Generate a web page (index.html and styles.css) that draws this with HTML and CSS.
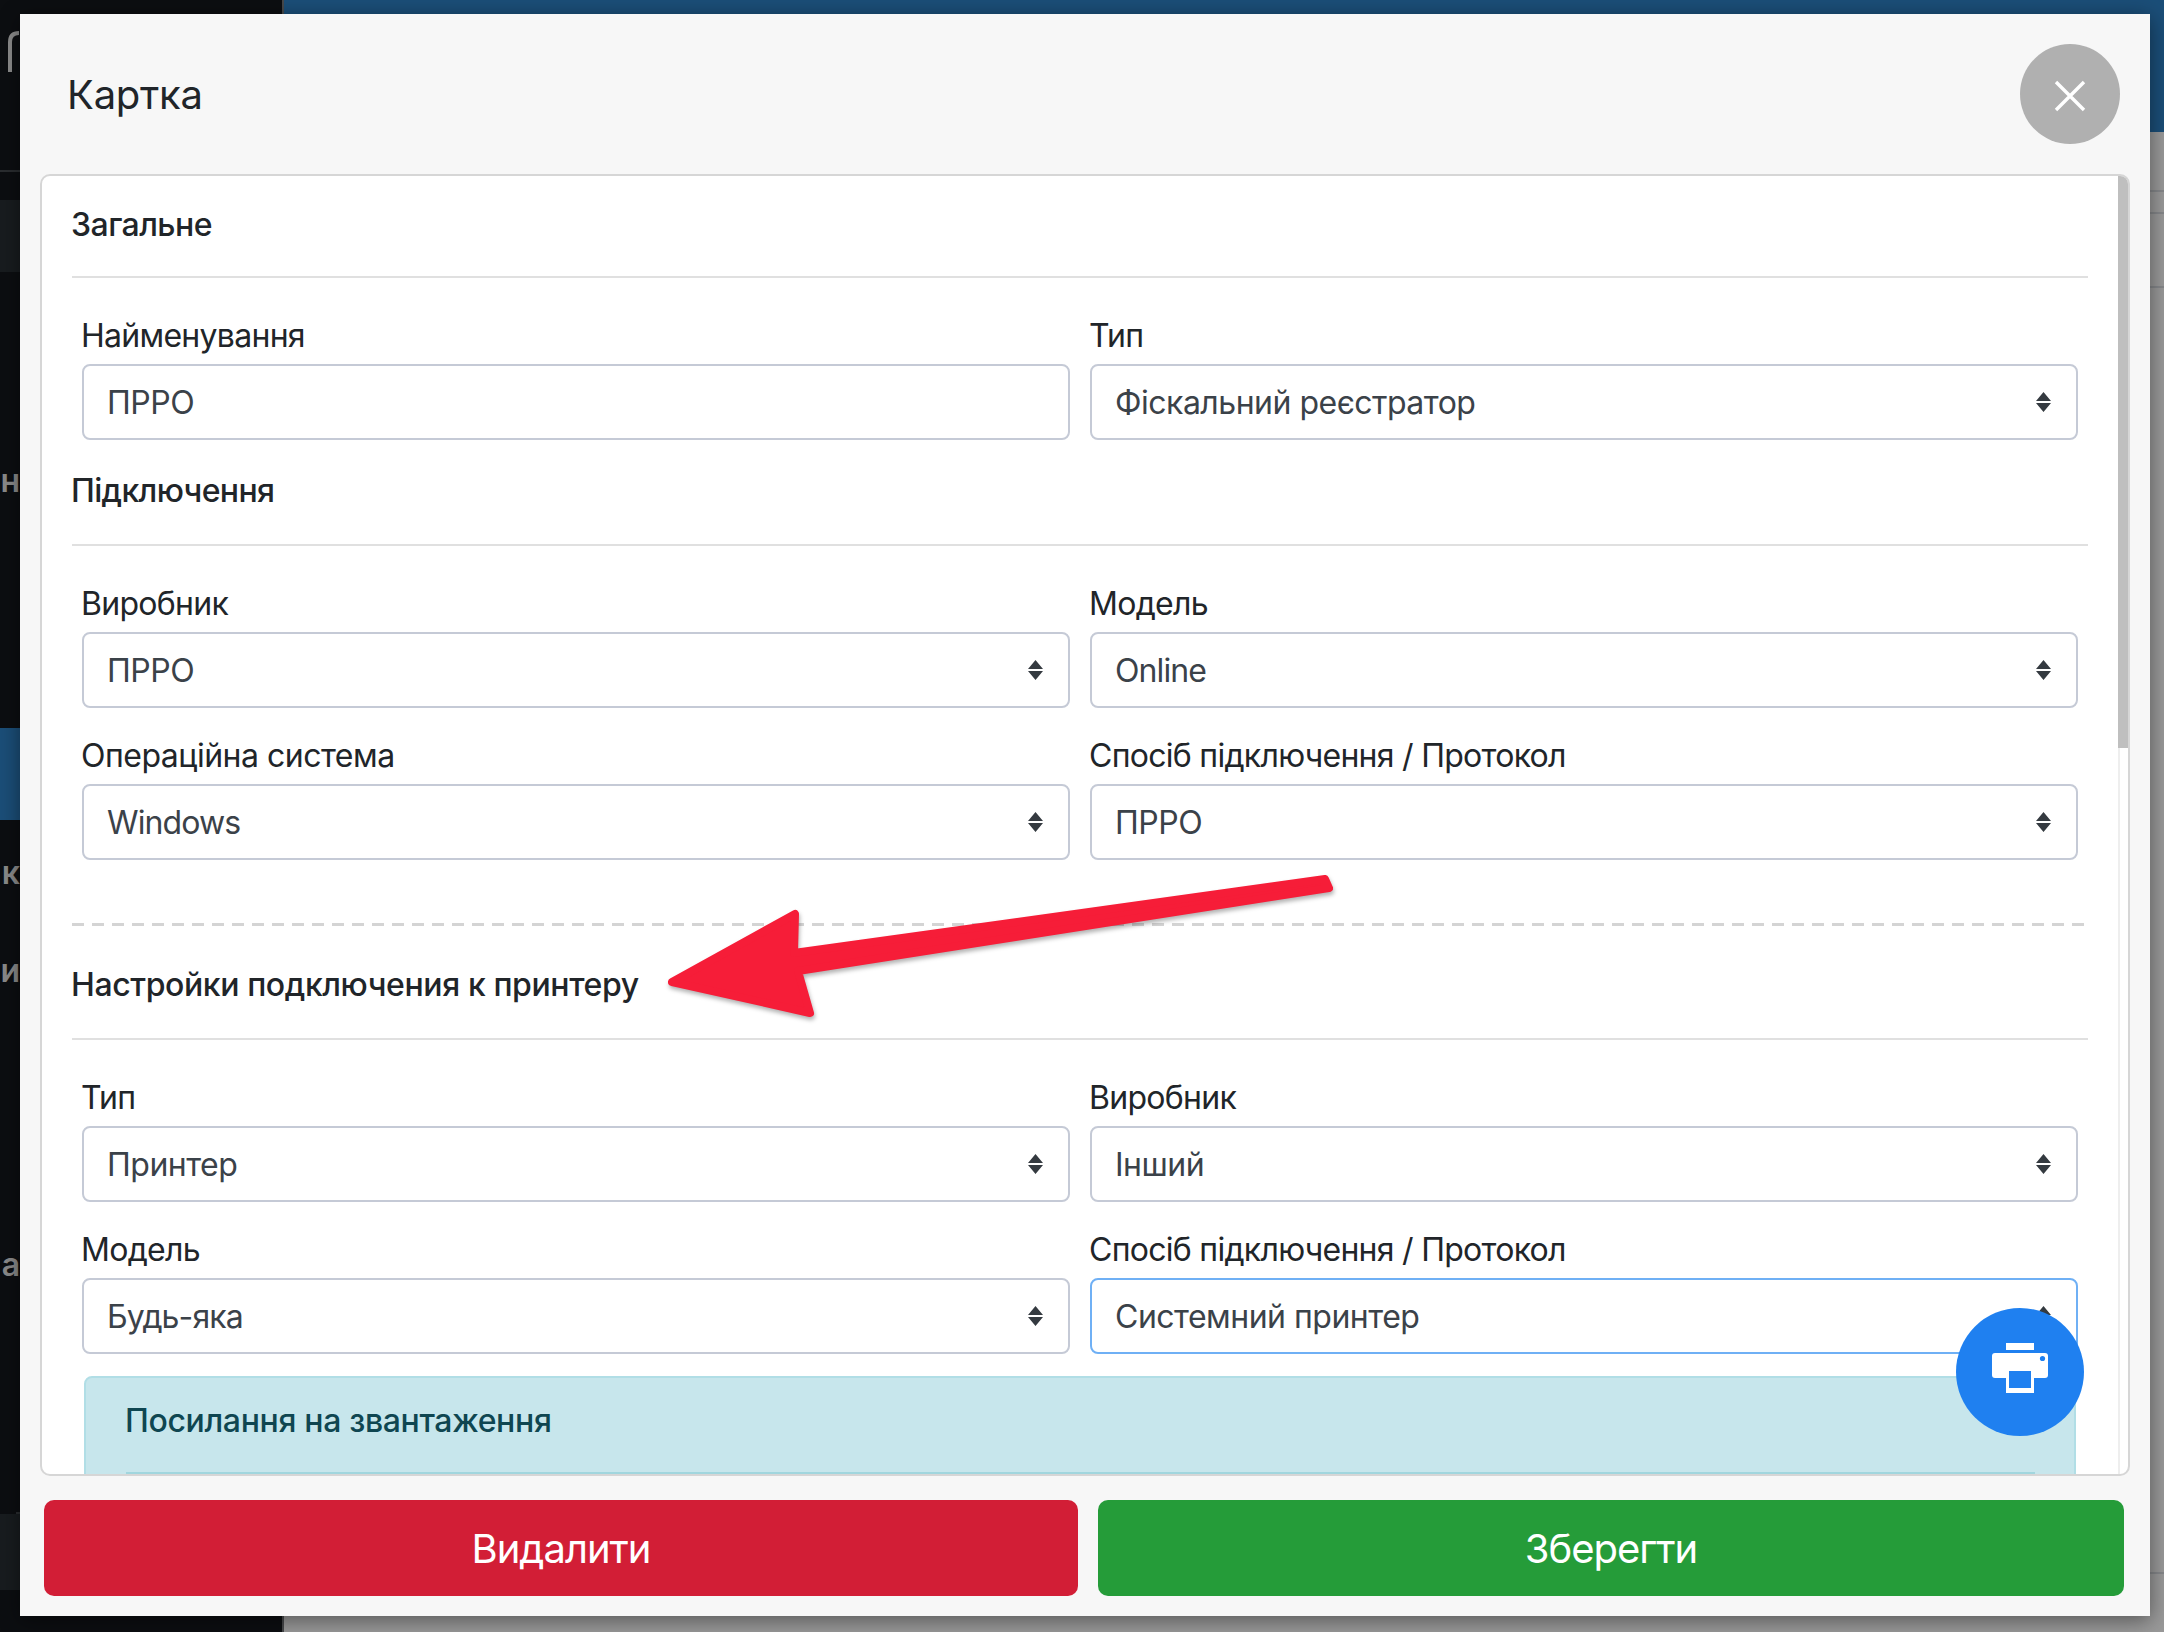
FILE: index.html
```html
<!DOCTYPE html>
<html lang="uk">
<head>
<meta charset="utf-8">
<title>Картка</title>
<link rel="stylesheet" href="styles.css">
</head>
<body>
<div class="backdrop">
  <aside class="sidebar">
    <div class="side-logo"><svg class="logo-arc" width="20" height="44" viewBox="0 0 20 44"><path d="M9 42V12Q9 3 18 3" fill="none" stroke="#8c8c8c" stroke-width="4"/></svg></div>
    <div class="side-dark"></div>
    <div class="side-item side-h"><span>н</span></div>
    <div class="side-active"></div>
    <div class="side-item side-k"><span>к</span></div>
    <div class="side-item side-i"><span>и</span></div>
    <div class="side-item side-a"><span>а</span></div>
    <div class="side-dark side-bottom"></div>
  </aside>
  <main class="page">
    <div class="page-top"></div>
    <div class="page-rows">
      <div class="page-row r1"></div>
      <div class="page-row r2"></div>
      <div class="page-row r3"></div>
      <div class="page-row r4"></div>
    </div>
  </main>
</div>

<section class="modal">
  <header class="modal-head">
    <h1 class="modal-title">Картка</h1>
    <button class="close-btn" aria-label="Закрити">
      <svg width="32" height="32" viewBox="0 0 32 32"><path d="M2 2L30 30M30 2L2 30" stroke="#fff" stroke-width="3.4" fill="none"/></svg>
    </button>
  </header>

  <div class="panel">
    <div class="panel-scroll">
      <h2 class="sec-title first">Загальне</h2>
      <div class="rule"></div>
      <div class="grid">
        <div class="field"><div class="label">Найменування</div><div class="control"><span>ПРРО</span></div></div>
        <div class="field"><div class="label">Тип</div><div class="control"><span>Фіскальний реєстратор</span><svg class="updown" width="17" height="20" viewBox="0 0 17 20"><path d="M8.500 0L16 9H1ZM8.500 20L1 11H16Z" fill="#343a40"/></svg></div></div>
      </div>
      <h2 class="sec-title second">Підключення</h2>
      <div class="rule"></div>
      <div class="grid">
        <div class="field"><div class="label">Виробник</div><div class="control"><span>ПРРО</span><svg class="updown" width="17" height="20" viewBox="0 0 17 20"><path d="M8.500 0L16 9H1ZM8.500 20L1 11H16Z" fill="#343a40"/></svg></div></div>
        <div class="field"><div class="label">Модель</div><div class="control"><span class="tight">Online</span><svg class="updown" width="17" height="20" viewBox="0 0 17 20"><path d="M8.500 0L16 9H1ZM8.500 20L1 11H16Z" fill="#343a40"/></svg></div></div>
        <div class="field"><div class="label wide">Операційна система</div><div class="control"><span class="tight">Windows</span><svg class="updown" width="17" height="20" viewBox="0 0 17 20"><path d="M8.500 0L16 9H1ZM8.500 20L1 11H16Z" fill="#343a40"/></svg></div></div>
        <div class="field"><div class="label">Спосіб підключення / Протокол</div><div class="control"><span>ПРРО</span><svg class="updown" width="17" height="20" viewBox="0 0 17 20"><path d="M8.500 0L16 9H1ZM8.500 20L1 11H16Z" fill="#343a40"/></svg></div></div>
      </div>
      <div class="dashed"></div>
      <h2 class="sec-title third">Настройки подключения к принтеру</h2>
      <div class="rule"></div>
      <div class="grid">
        <div class="field"><div class="label">Тип</div><div class="control"><span>Принтер</span><svg class="updown" width="17" height="20" viewBox="0 0 17 20"><path d="M8.500 0L16 9H1ZM8.500 20L1 11H16Z" fill="#343a40"/></svg></div></div>
        <div class="field"><div class="label">Виробник</div><div class="control"><span>Інший</span><svg class="updown" width="17" height="20" viewBox="0 0 17 20"><path d="M8.500 0L16 9H1ZM8.500 20L1 11H16Z" fill="#343a40"/></svg></div></div>
        <div class="field"><div class="label">Модель</div><div class="control"><span class="tight">Будь-яка</span><svg class="updown" width="17" height="20" viewBox="0 0 17 20"><path d="M8.500 0L16 9H1ZM8.500 20L1 11H16Z" fill="#343a40"/></svg></div></div>
        <div class="field"><div class="label">Спосіб підключення / Протокол</div><div class="control focus"><span>Системний принтер</span><svg class="updown" width="17" height="20" viewBox="0 0 17 20"><path d="M8.500 0L16 9H1ZM8.500 20L1 11H16Z" fill="#343a40"/></svg></div></div>
      </div>
      <div class="alert">
        <div class="alert-title">Посилання на звантаження</div>
        <div class="alert-rule"></div>
      </div>
    </div>
    <div class="scroll-thumb"></div>
    <div class="scroll-track"></div>
  </div>

  <footer class="actions">
    <button class="btn danger">Видалити</button>
    <button class="btn success">Зберегти</button>
  </footer>

  <button class="fab" aria-label="Друк">
    <svg class="fab-icon" width="56" height="50" viewBox="0 0 56 50">
      <rect x="14" y="0" width="28" height="7" fill="#fff"/>
      <path d="M3 10H53A3 3 0 0 1 56 13V32A3 3 0 0 1 53 35H3A3 3 0 0 1 0 32V13A3 3 0 0 1 3 10Z" fill="#fff"/>
      <rect x="14" y="28" width="28" height="22" fill="#fff"/>
      <rect x="17" y="28" width="22" height="17" fill="#1f80f0"/>
      <circle cx="50.500" cy="15.500" r="2.600" fill="#1f80f0"/>
    </svg>
  </button>

  <svg class="arrow" width="700" height="170" viewBox="0 0 700 170">
    <path d="M665 11L669 20L138 103L150 145L12 114L135 46L134 85Z" fill="#f61d38" stroke="#f61d38" stroke-width="8" stroke-linejoin="round"/>
  </svg>
</section>
</body>
</html>
```

FILE: styles.css
```css
* { box-sizing: border-box; }
html, body { margin: 0; padding: 0; }
body {
  width: 2164px;
  height: 1632px;
  overflow: hidden;
  position: relative;
  font-family: Inter, "Liberation Sans", sans-serif;
  background: #999;
}
.backdrop { display: flex; height: 1632px; }

.sidebar {
  width: 284px;
  flex: none;
  background: #0c0e11;
  border-right: 2px solid #47494b;
  display: flex;
  flex-direction: column;
  color: #8a8a8a;
  font-size: 32px;
  font-weight: 600;
  overflow: hidden;
}
.side-logo { height: 172px; border-bottom: 2px solid #2a2d30; padding: 30px 0 0 1px; flex: none; }
.logo-arc { display: block; }
.side-dark { height: 72px; margin-top: 28px; background: #181c1f; flex: none; }
.side-item { text-align: right; padding-right: 262px; height: 40px; line-height: 40px; white-space: nowrap; flex: none; }
.side-h { margin-top: 189px; }
.side-active { height: 92px; margin-top: 227px; background: #1b4e78; flex: none; }
.side-k { margin-top: 33px; }
.side-i { margin-top: 58px; }
.side-a { margin-top: 254px; }
.side-bottom { margin-top: 229px; height: 76px; box-shadow: 0 -18px 0 -16px #2a2d30; }

.page { flex: 1; display: flex; flex-direction: column; }
.page-top { height: 132px; background: #1b4e78; flex: none; }
.page-rows { flex: 1; background: #999; }
.page-row { height: 2px; background: #85878a; }
.r1 { margin-top: 58px; }
.r2 { margin-top: 20px; }
.r3 { margin-top: 72px; }
.r4 { margin-top: 1284px; }

.modal {
  position: absolute;
  left: 20px;
  top: 14px;
  width: 2130px;
  height: 1602px;
  background: #f7f7f7;
  box-shadow: 0 4px 20px rgba(0,0,0,.45);
  display: flex;
  flex-direction: column;
}
.modal-head {
  height: 160px;
  flex: none;
  display: flex;
  align-items: center;
  justify-content: space-between;
  padding: 0 30px 0 47px;
}
.modal-title { margin: 1px 0 0; font-size: 40px; font-weight: 400; color: #212529; letter-spacing: -.25px; }
.close-btn {
  width: 100px; height: 100px; border-radius: 50%; border: 0; padding: 4px 0 0;
  background: #b0b0b0; display: flex; align-items: center; justify-content: center;
}

.panel {
  position: relative;
  margin: 0 20px;
  height: 1302px;
  flex: none;
  background: #fff;
  border: 2px solid #d6d6d6;
  border-radius: 10px;
  overflow: hidden;
}
.panel-scroll { padding: 0 40px 0 30px; height: 100%; overflow: hidden; }
.sec-title {
  margin: 0 0 0 -1px;
  padding-top: 1px;
  font-size: 32px;
  font-weight: 500;
  color: #212529;
  line-height: 40px;
  height: 74px;
  letter-spacing: -.4px;
}
.sec-title.first { margin-top: 0; padding-top: 29px; height: 100px; letter-spacing: -.55px; }
.sec-title.second { margin-top: 30px; letter-spacing: -.65px; }
.sec-title.third { margin-top: 38px; }
.rule { height: 2px; background: #e0e0e0; }
.grid {
  display: grid;
  grid-template-columns: 1fr 1fr;
  gap: 28px 20px;
  padding: 38px 10px 0;
}
.field { height: 124px; }
.label { margin-left: -1px; font-size: 32px; color: #212529; line-height: 40px; height: 48px; letter-spacing: -.72px; }
.label.wide { letter-spacing: -.5px; }
.control {
  height: 76px;
  border: 2px solid #c5cad6;
  border-radius: 8px;
  padding: 0 24px 0 23px;
  display: flex;
  align-items: center;
  justify-content: space-between;
  font-size: 32px;
  letter-spacing: -.5px;
  color: #3b4249;
  background: #fff;
}
.control .tight { letter-spacing: -.9px; }
.control.focus { border-color: #6fb0f5; }
.updown { flex: none; }
.dashed {
  height: 3px;
  margin-top: 63px;
  background: repeating-linear-gradient(90deg, #d4d4d4 0 12px, transparent 12px 20px);
}
.alert {
  margin: 22px 12px 0;
  height: 200px;
  background: #c7e6ec;
  border: 2px solid #b1dee6;
  border-radius: 8px;
  padding: 23px 40px 0 39px;
  color: #0f4651;
}
.alert-title { font-size: 32px; font-weight: 500; line-height: 40px; letter-spacing: -.35px; }
.alert-rule { height: 2px; background: #a1d6de; margin: 31px -1px 0 1px; }
.scroll-thumb { position: absolute; right: 0; top: 0; width: 10px; height: 572px; background: #bfbfbf; }
.scroll-track { position: absolute; right: 0; top: 572px; bottom: 0; width: 10px; border-left: 2px solid #eee; }

.actions { flex: none; display: grid; grid-template-columns: 1034px 1026px; gap: 20px; padding: 24px 0 0 24px; }
.btn { height: 96px; border: 0; border-radius: 10px; color: #fff; font: 400 40px Inter, "Liberation Sans", sans-serif; letter-spacing: -1px; }
.danger { background: #d21e36; }
.success { background: #259c39; }

.fab {
  position: absolute;
  left: 1936px;
  top: 1294px;
  width: 128px;
  height: 128px;
  border-radius: 50%;
  border: 0;
  padding: 0 0 8px;
  background: #1f80f0;
  display: flex;
  align-items: center;
  justify-content: center;
}
.arrow {
  position: absolute;
  left: 640px;
  top: 854px;
  overflow: visible;
  filter: drop-shadow(1px 3px 2px rgba(0,0,0,.3));
}
```
